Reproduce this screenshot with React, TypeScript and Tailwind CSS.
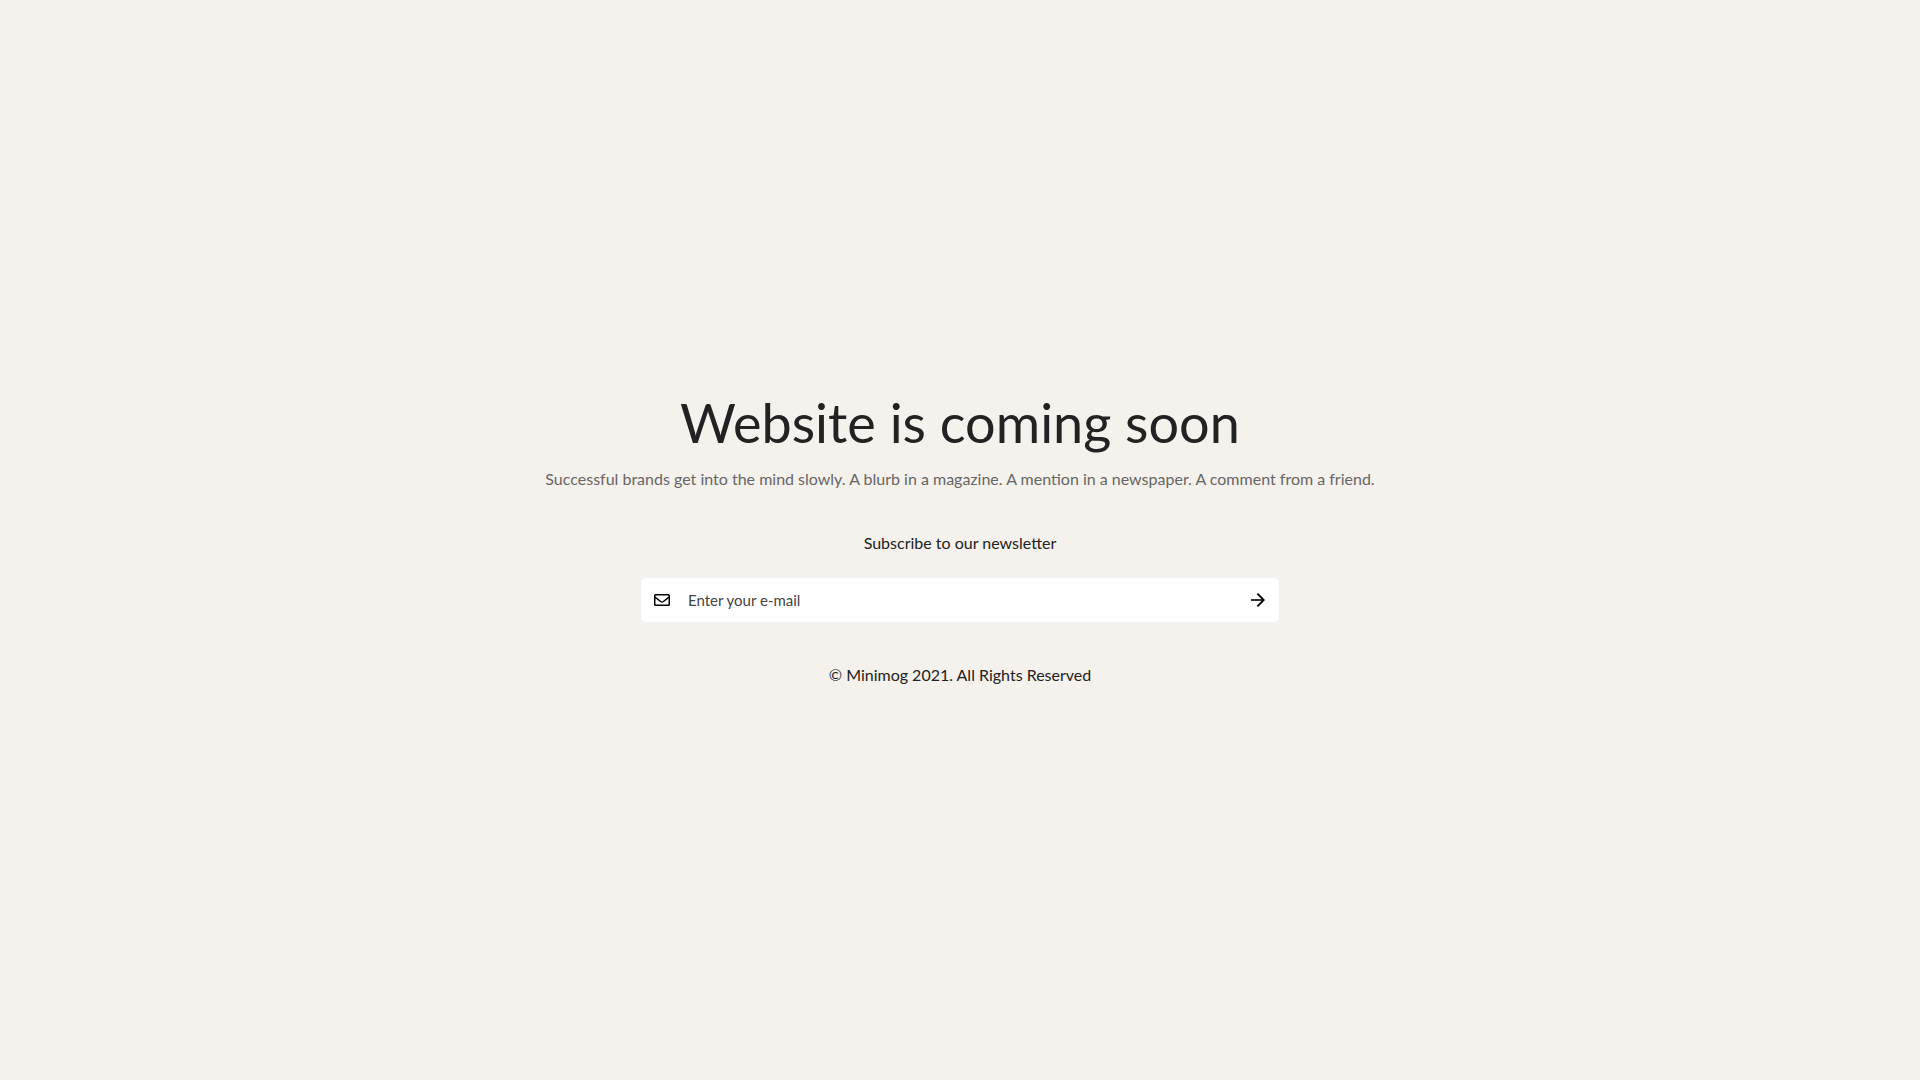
import { useState } from "react";

function EnvelopeIcon() {
  return (
    <svg
      className="h-3 w-4 shrink-0"
      viewBox="0 0 16 12"
      fill="none"
      stroke="currentColor"
      strokeWidth="1.5"
      aria-hidden="true"
    >
      <rect x="0.75" y="0.75" width="14.5" height="10.5" rx="0.8" />
      <path d="M1 3.2 6.6 7.5c.9.65 1.9.65 2.8 0L15 3.2" />
    </svg>
  );
}

function ArrowIcon() {
  return (
    <svg
      className="size-3.5"
      viewBox="0 0 14 14"
      fill="none"
      stroke="currentColor"
      aria-hidden="true"
    >
      <path strokeWidth="1.6" d="M0 7h12.6" />
      <path strokeWidth="1.8" d="M6.4.6 12.8 7l-6.4 6.4" />
    </svg>
  );
}

function NewsletterForm() {
  const [email, setEmail] = useState("");

  return (
    <form
      onSubmit={(e) => e.preventDefault()}
      className="mt-[22px] flex h-[46px] w-full max-w-[640px] items-center rounded-md border border-[#f1f1f1] bg-white pl-[13px] text-black"
    >
      <EnvelopeIcon />
      <input
        type="email"
        aria-label="E-mail"
        placeholder="Enter your e-mail"
        value={email}
        onChange={(e) => setEmail(e.target.value)}
        className="h-full min-w-0 flex-1 bg-transparent pl-[18px] text-[15px] text-[#222222] outline-none placeholder:text-[#444444]"
      />
      <button
        type="submit"
        aria-label="Subscribe"
        className="flex h-full items-center px-3.5"
      >
        <ArrowIcon />
      </button>
    </form>
  );
}

export default function App() {
  return (
    <main className="flex min-h-screen flex-col items-center justify-center bg-[#f5f1ec] px-4 text-center font-['Lato',sans-serif] text-[#222222]">
      <h1 className="text-[54px] leading-[60px] font-normal">
        Website is coming soon
      </h1>
      <p className="mt-3.5 text-base text-[#666666]">
        Successful brands get into the mind slowly. A blurb in a magazine. A
        mention in a newspaper. A comment from a friend.
      </p>
      <h2 className="mt-10 text-base">Subscribe to our newsletter</h2>
      <NewsletterForm />
      <p className="mt-10 text-base">© Minimog 2021. All Rights Reserved</p>
    </main>
  );
}
